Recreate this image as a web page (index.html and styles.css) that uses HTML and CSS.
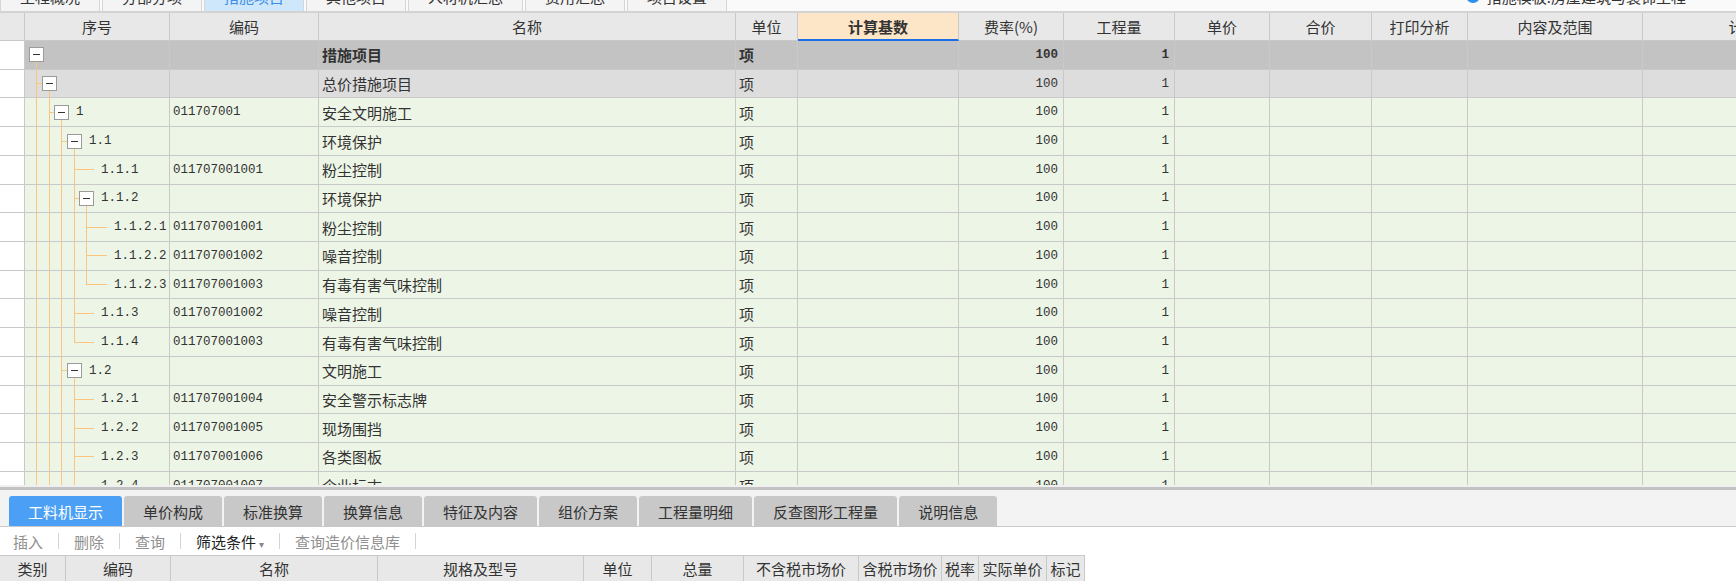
FILE: index.html
```html
<!DOCTYPE html>
<html lang="zh-CN">
<head>
<meta charset="utf-8">
<title>措施项目</title>
<link rel="stylesheet" href="styles.css">
</head>
<body>
<div class="topbar">
  <div class="ttabs">
    <div class="ttab">工程概况</div>
    <div class="ttab">分部分项</div>
    <div class="ttab on">措施项目</div>
    <div class="ttab">其他项目</div>
    <div class="ttab">人材机汇总</div>
    <div class="ttab">费用汇总</div>
    <div class="ttab">项目设置</div>
  </div>
  <div class="tinfo"><span class="dot"></span><span>措施模板:房屋建筑与装饰工程</span><span class="more">⋯</span></div>
</div>

<div class="grid">
  <div class="row hd">
    <div class="c"></div><div class="c">序号</div><div class="c">编码</div><div class="c">名称</div><div class="c">单位</div><div class="c base">计算基数</div><div class="c">费率(%)</div><div class="c">工程量</div><div class="c">单价</div><div class="c">合价</div><div class="c">打印分析</div><div class="c">内容及范围</div><div class="c">计价方式</div>
  </div>

  <div class="row r0">
    <div class="c"></div>
    <div class="c tree"><span class="s open"><span class="bx"></span></span></div>
    <div class="c mono"></div><div class="c">措施项目</div><div class="c">项</div><div class="c"></div><div class="c num">100</div><div class="c num">1</div><div class="c"></div><div class="c"></div><div class="c"></div><div class="c"></div><div class="c"></div>
  </div>

  <div class="row r1">
    <div class="c"></div>
    <div class="c tree"><span class="g t"></span><span class="s open"><span class="bx"></span></span></div>
    <div class="c mono"></div><div class="c">总价措施项目</div><div class="c">项</div><div class="c"></div><div class="c num">100</div><div class="c num">1</div><div class="c"></div><div class="c"></div><div class="c"></div><div class="c"></div><div class="c"></div>
  </div>

  <div class="row rg">
    <div class="c"></div>
    <div class="c tree"><span class="g v"></span><span class="g t"></span><span class="s open"><span class="bx"></span></span><span class="sn">1</span></div>
    <div class="c mono">011707001</div><div class="c">安全文明施工</div><div class="c">项</div><div class="c"></div><div class="c num">100</div><div class="c num">1</div><div class="c"></div><div class="c"></div><div class="c"></div><div class="c"></div><div class="c"></div>
  </div>

  <div class="row rg">
    <div class="c"></div>
    <div class="c tree"><span class="g v"></span><span class="g v"></span><span class="g t"></span><span class="s open"><span class="bx"></span></span><span class="sn">1.1</span></div>
    <div class="c mono"></div><div class="c">环境保护</div><div class="c">项</div><div class="c"></div><div class="c num">100</div><div class="c num">1</div><div class="c"></div><div class="c"></div><div class="c"></div><div class="c"></div><div class="c"></div>
  </div>

  <div class="row rg">
    <div class="c"></div>
    <div class="c tree"><span class="g v"></span><span class="g v"></span><span class="g v"></span><span class="g t"></span><span class="s leaf"></span><span class="sn">1.1.1</span></div>
    <div class="c mono">011707001001</div><div class="c">粉尘控制</div><div class="c">项</div><div class="c"></div><div class="c num">100</div><div class="c num">1</div><div class="c"></div><div class="c"></div><div class="c"></div><div class="c"></div><div class="c"></div>
  </div>

  <div class="row rg">
    <div class="c"></div>
    <div class="c tree"><span class="g v"></span><span class="g v"></span><span class="g v"></span><span class="g t"></span><span class="s open"><span class="bx"></span></span><span class="sn">1.1.2</span></div>
    <div class="c mono"></div><div class="c">环境保护</div><div class="c">项</div><div class="c"></div><div class="c num">100</div><div class="c num">1</div><div class="c"></div><div class="c"></div><div class="c"></div><div class="c"></div><div class="c"></div>
  </div>

  <div class="row rg">
    <div class="c"></div>
    <div class="c tree"><span class="g v"></span><span class="g v"></span><span class="g v"></span><span class="g v"></span><span class="g t"></span><span class="s leaf"></span><span class="sn">1.1.2.1</span></div>
    <div class="c mono">011707001001</div><div class="c">粉尘控制</div><div class="c">项</div><div class="c"></div><div class="c num">100</div><div class="c num">1</div><div class="c"></div><div class="c"></div><div class="c"></div><div class="c"></div><div class="c"></div>
  </div>

  <div class="row rg">
    <div class="c"></div>
    <div class="c tree"><span class="g v"></span><span class="g v"></span><span class="g v"></span><span class="g v"></span><span class="g t"></span><span class="s leaf"></span><span class="sn">1.1.2.2</span></div>
    <div class="c mono">011707001002</div><div class="c">噪音控制</div><div class="c">项</div><div class="c"></div><div class="c num">100</div><div class="c num">1</div><div class="c"></div><div class="c"></div><div class="c"></div><div class="c"></div><div class="c"></div>
  </div>

  <div class="row rg">
    <div class="c"></div>
    <div class="c tree"><span class="g v"></span><span class="g v"></span><span class="g v"></span><span class="g v"></span><span class="g e"></span><span class="s leaf"></span><span class="sn">1.1.2.3</span></div>
    <div class="c mono">011707001003</div><div class="c">有毒有害气味控制</div><div class="c">项</div><div class="c"></div><div class="c num">100</div><div class="c num">1</div><div class="c"></div><div class="c"></div><div class="c"></div><div class="c"></div><div class="c"></div>
  </div>

  <div class="row rg">
    <div class="c"></div>
    <div class="c tree"><span class="g v"></span><span class="g v"></span><span class="g v"></span><span class="g t"></span><span class="s leaf"></span><span class="sn">1.1.3</span></div>
    <div class="c mono">011707001002</div><div class="c">噪音控制</div><div class="c">项</div><div class="c"></div><div class="c num">100</div><div class="c num">1</div><div class="c"></div><div class="c"></div><div class="c"></div><div class="c"></div><div class="c"></div>
  </div>

  <div class="row rg">
    <div class="c"></div>
    <div class="c tree"><span class="g v"></span><span class="g v"></span><span class="g v"></span><span class="g e"></span><span class="s leaf"></span><span class="sn">1.1.4</span></div>
    <div class="c mono">011707001003</div><div class="c">有毒有害气味控制</div><div class="c">项</div><div class="c"></div><div class="c num">100</div><div class="c num">1</div><div class="c"></div><div class="c"></div><div class="c"></div><div class="c"></div><div class="c"></div>
  </div>

  <div class="row rg">
    <div class="c"></div>
    <div class="c tree"><span class="g v"></span><span class="g v"></span><span class="g t"></span><span class="s open"><span class="bx"></span></span><span class="sn">1.2</span></div>
    <div class="c mono"></div><div class="c">文明施工</div><div class="c">项</div><div class="c"></div><div class="c num">100</div><div class="c num">1</div><div class="c"></div><div class="c"></div><div class="c"></div><div class="c"></div><div class="c"></div>
  </div>

  <div class="row rg">
    <div class="c"></div>
    <div class="c tree"><span class="g v"></span><span class="g v"></span><span class="g v"></span><span class="g t"></span><span class="s leaf"></span><span class="sn">1.2.1</span></div>
    <div class="c mono">011707001004</div><div class="c">安全警示标志牌</div><div class="c">项</div><div class="c"></div><div class="c num">100</div><div class="c num">1</div><div class="c"></div><div class="c"></div><div class="c"></div><div class="c"></div><div class="c"></div>
  </div>

  <div class="row rg">
    <div class="c"></div>
    <div class="c tree"><span class="g v"></span><span class="g v"></span><span class="g v"></span><span class="g t"></span><span class="s leaf"></span><span class="sn">1.2.2</span></div>
    <div class="c mono">011707001005</div><div class="c">现场围挡</div><div class="c">项</div><div class="c"></div><div class="c num">100</div><div class="c num">1</div><div class="c"></div><div class="c"></div><div class="c"></div><div class="c"></div><div class="c"></div>
  </div>

  <div class="row rg">
    <div class="c"></div>
    <div class="c tree"><span class="g v"></span><span class="g v"></span><span class="g v"></span><span class="g t"></span><span class="s leaf"></span><span class="sn">1.2.3</span></div>
    <div class="c mono">011707001006</div><div class="c">各类图板</div><div class="c">项</div><div class="c"></div><div class="c num">100</div><div class="c num">1</div><div class="c"></div><div class="c"></div><div class="c"></div><div class="c"></div><div class="c"></div>
  </div>

  <div class="row rg">
    <div class="c"></div>
    <div class="c tree"><span class="g v"></span><span class="g v"></span><span class="g v"></span><span class="g t"></span><span class="s leaf"></span><span class="sn">1.2.4</span></div>
    <div class="c mono">011707001007</div><div class="c">企业标志</div><div class="c">项</div><div class="c"></div><div class="c num">100</div><div class="c num">1</div><div class="c"></div><div class="c"></div><div class="c"></div><div class="c"></div><div class="c"></div>
  </div>
</div>

<div class="split"></div>

<div class="btabs">
  <div class="btab on">工料机显示</div>
  <div class="btab">单价构成</div>
  <div class="btab">标准换算</div>
  <div class="btab">换算信息</div>
  <div class="btab">特征及内容</div>
  <div class="btab">组价方案</div>
  <div class="btab">工程量明细</div>
  <div class="btab">反查图形工程量</div>
  <div class="btab">说明信息</div>
</div>

<div class="tool">
  <span>插入</span><span class="sep"></span>
  <span>删除</span><span class="sep"></span>
  <span>查询</span><span class="sep"></span>
  <span class="dark">筛选条件<span class="caret">▾</span></span><span class="sep"></span>
  <span>查询造价信息库</span><span class="sep"></span>
</div>

<div class="bhead">
  <div class="bc">类别</div><div class="bc">编码</div><div class="bc">名称</div><div class="bc">规格及型号</div><div class="bc">单位</div><div class="bc">总量</div><div class="bc">不含税市场价</div><div class="bc">含税市场价</div><div class="bc">税率</div><div class="bc">实际单价</div><div class="bc">标记</div>
</div>
</body>
</html>
```

FILE: styles.css
```css
* { box-sizing: border-box; }
html, body { margin: 0; padding: 0; }
body {
  width: 1736px;
  height: 581px;
  overflow: hidden;
  background: #fff;
  font-family: "Noto Sans CJK SC", "Noto Sans", sans-serif;
  font-size: 15px;
  color: #333;
}

/* top tab strip (mostly scrolled off) */
.topbar {
  display: flex;
  height: 32px;
  margin-top: -19px;
  border-bottom: 2px solid #d3d3d3;
  background: #fafafa;
}
.ttabs { display: flex; gap: 2px; }
.ttab {
  display: flex;
  align-items: center;
  padding: 0 19px;
  background: #f4f4f4;
  border: 1px solid #d6d6d6;
  border-bottom: none;
}
.ttab.on { background: #cfe7fb; color: #3a8ee6; }
.tinfo {
  margin-left: auto;
  display: flex;
  align-items: center;
  gap: 7px;
  padding-right: 24px;
  color: #333;
}
.dot { width: 14px; height: 14px; border-radius: 50%; background: #2f8ff0; }
.more { color: #aaa; margin-left: 4px; }

/* main grid */
.grid { height: 472px; overflow: hidden; }
.row {
  display: grid;
  grid-template-columns: 25px 145px 149px 417px 62px 161px 105px 111px 95px 102px 96px 175px 232px;
  width: 1875px;
  height: 28.73px;
}
.c {
  display: flex;
  align-items: center;
  padding: 0 3px;
  border-right: 1px solid #c9c9c9;
  border-bottom: 1px solid #c9c9c9;
  white-space: nowrap;
  overflow: hidden;
}
.hd { height: 28px; background: #e8e8e8; }
.hd .c { justify-content: center; }
.hd .base {
  background: #fde5c7;
  font-weight: bold;
  border-bottom: 2px solid #1a6ee8;
}

.r0 { background: #c3c3c3; font-weight: bold; }
.r1 { background: #dddddd; }
.rg { background: #edf6e6; }
.r0 .c:first-child, .r1 .c:first-child, .rg .c:first-child { background: #fff; }

.mono, .num, .sn {
  font-family: "Liberation Mono", monospace;
  font-size: 12.5px;
}
.num { justify-content: flex-end; padding-right: 5px; }

/* tree column */
.tree { align-items: stretch; padding: 0 0 0 4px; }
.g { flex: none; width: 13px; }
.g:nth-child(even) { width: 12px; }
.g.v {
  background: linear-gradient(#fbc57d, #fbc57d) no-repeat 7px 0 / 1px 100%;
}
.g.t {
  background:
    linear-gradient(#fbc57d, #fbc57d) no-repeat 7px 0 / 1px 100%,
    linear-gradient(#fbc57d, #fbc57d) no-repeat 7px 50% / 100% 1px;
}
.g.e {
  background:
    linear-gradient(#fbc57d, #fbc57d) no-repeat 7px 0 / 1px 50%,
    linear-gradient(#fbc57d, #fbc57d) no-repeat 7px 50% / 100% 1px;
}
.s { flex: none; width: 15px; display: flex; align-items: center; }
.s.leaf { background: linear-gradient(#fbc57d, #fbc57d) no-repeat 0 50% / 100% 1px; }
.s.open { background: linear-gradient(#fbc57d, #fbc57d) no-repeat 7px 100% / 1px 50%; }
.bx {
  width: 15px;
  height: 15px;
  border: 1px solid #9b9b9b;
  background: linear-gradient(#333, #333) center / 7px 1px no-repeat #fff;
}
.sn { align-self: center; margin-left: 7px; color: #333; }

/* splitter + bottom tabs */
.split { height: 5px; border-top: 2px solid #f0f0f0; background: #c2c2c2; }
.btabs {
  display: flex;
  gap: 2px;
  height: 37px;
  padding: 6px 0 0 9px;
  background: #f3f3f3;
  border-bottom: 1px solid #c9c9c9;
}
.btab {
  display: flex;
  align-items: center;
  padding: 0 19px;
  background: #c8c8c8;
  border-radius: 3px 3px 0 0;
  color: #333;
}
.btab.on { background: #4ba0f6; color: #fff; }

/* toolbar */
.tool {
  display: flex;
  align-items: center;
  gap: 15px;
  height: 28px;
  padding-left: 13px;
  color: #8f8f8f;
}
.sep { width: 1px; height: 16px; background: #d4d4d4; }
.tool .dark { color: #222; }
.caret { color: #888; font-size: 10px; margin-left: 3px; }

/* bottom header */
.bhead {
  display: grid;
  grid-template-columns: 66px 105px 207px 206px 68px 92px 115px 83px 37px 68px 38px;
  width: 1085px;
  height: 26px;
  border-top: 1px solid #c8c8c8;
  background: #e8e8e8;
}
.bc {
  display: flex;
  align-items: center;
  justify-content: center;
  border-right: 1px solid #c8c8c8;
  white-space: nowrap;
  overflow: hidden;
}
```
